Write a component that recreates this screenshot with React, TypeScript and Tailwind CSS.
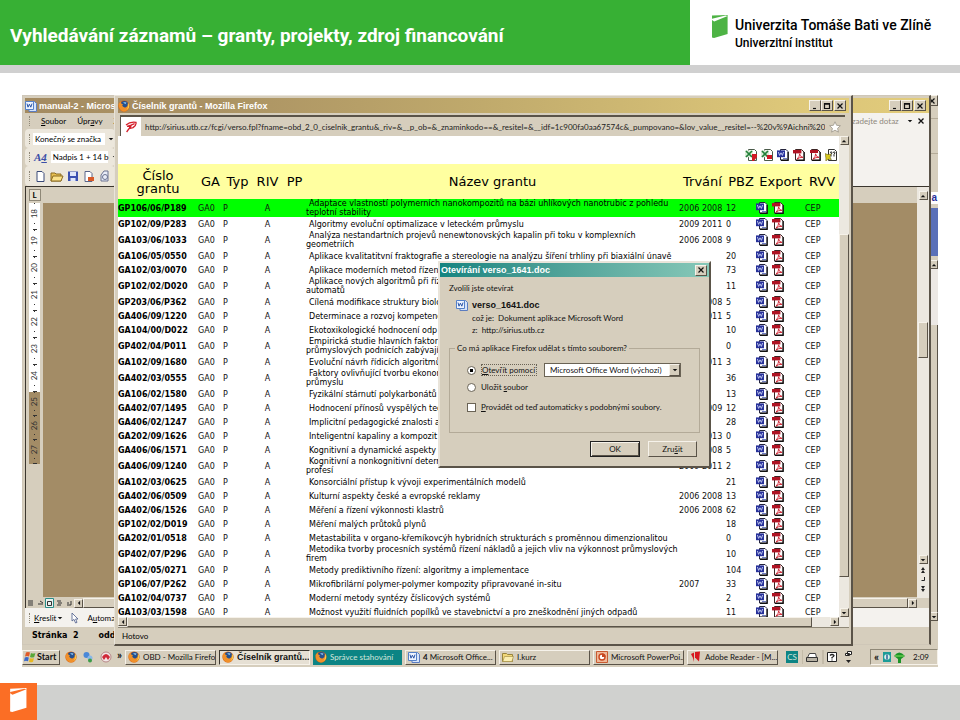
import React from 'react';
import clsx from 'clsx';

const ui = "font-['Lato','Liberation_Sans',Arial,sans-serif] text-[8px] leading-[10px]";
const caption = "font-['Liberation_Sans',Arial,sans-serif] text-[9px] font-bold whitespace-nowrap";
const bevel =
  'border border-t-[#f6f2ea] border-l-[#f6f2ea] border-r-[#5a5348] border-b-[#5a5348] bg-[#d6cebd]';

type Grant = {
  id: string;
  name: string;
  years?: string;
  pbz: string;
};

const grants: Grant[] = [
  { id: 'GP106/06/P189', name: 'Adaptace vlastností polymerních nanokompozitů na bázi uhlíkových nanotrubic z pohledu\nteplotní stability', years: '2006 2008', pbz: '12' },
  { id: 'GP102/09/P283', name: 'Algoritmy evoluční optimalizace v leteckém průmyslu', years: '2009 2011', pbz: '0' },
  { id: 'GA103/06/1033', name: 'Analýza nestandartních projevů nenewtonovských kapalin při toku v komplexních\ngeometriích', years: '2006 2008', pbz: '9' },
  { id: 'GA106/05/0550', name: 'Aplikace kvalitatitvní fraktografie a stereologie na analýzu šíření trhliny při biaxiální únavě', pbz: '20' },
  { id: 'GA102/03/0070', name: 'Aplikace moderních metod řízení', pbz: '73' },
  { id: 'GP102/02/D020', name: 'Aplikace nových algoritmů při říz\nautomatů', pbz: '11' },
  { id: 'GP203/06/P362', name: 'Cílená modifikace struktury biolo', years: '2006 2008', pbz: '5' },
  { id: 'GA406/09/1220', name: 'Determinace a rozvoj kompetenc', years: '2009 2011', pbz: '5' },
  { id: 'GA104/00/D022', name: 'Ekotoxikologické hodnocení odp', pbz: '10' },
  { id: 'GP402/04/P011', name: 'Empirická studie hlavních faktorů\nprůmyslových podnicích zabývajíc', pbz: '0' },
  { id: 'GA102/09/1680', name: 'Evoluční návrh řídicích algoritmů', years: '2009 2011', pbz: '3' },
  { id: 'GA402/03/0555', name: 'Faktory ovlivňující tvorbu ekonom\nprůmyslu', pbz: '36' },
  { id: 'GA106/02/1580', name: 'Fyzikální stárnutí polykarbonátů', pbz: '13' },
  { id: 'GA402/07/1495', name: 'Hodnocení přínosů vyspělých tec', years: '2007 2009', pbz: '12' },
  { id: 'GA406/02/1247', name: 'Implicitní pedagogické znalosti a', pbz: '28' },
  { id: 'GA202/09/1626', name: 'Inteligentní kapaliny a kompozit', years: '2009 2013', pbz: '0' },
  { id: 'GA406/06/1571', name: 'Kognitivní a dynamické aspekty', years: '2006 2008', pbz: '5' },
  { id: 'GA406/09/1240', name: 'Kognitivní a nonkognitivní determ\nprofesí', years: '2009 2011', pbz: '2' },
  { id: 'GA102/03/0625', name: 'Konsorciální přístup k vývoji experimentálních modelů', pbz: '21' },
  { id: 'GA402/06/0509', name: 'Kulturní aspekty české a evropské reklamy', years: '2006 2008', pbz: '13' },
  { id: 'GA402/06/1526', name: 'Měření a řízení výkonnosti klastrů', years: '2006 2008', pbz: '62' },
  { id: 'GP102/02/D019', name: 'Měření malých průtoků plynů', pbz: '18' },
  { id: 'GA202/01/0518', name: 'Metastabilita v organo-křemíkovcýh hybridních strukturách s proměnnou dimenzionalitou', pbz: '0' },
  { id: 'GP402/07/P296', name: 'Metodika tvorby procesních systémů řízení nákladů a jejich vliv na výkonnost průmyslových\nfirem', pbz: '10' },
  { id: 'GA102/05/0271', name: 'Metody prediktivního řízení: algoritmy a implementace', pbz: '104' },
  { id: 'GP106/07/P262', name: 'Mikrofibrilární polymer-polymer kompozity připravované in-situ', years: '2007', pbz: '33' },
  { id: 'GA102/04/0737', name: 'Moderní metody syntézy číslicových systémů', pbz: '2' },
  { id: 'GA103/03/1598', name: 'Možnost využití fluidních popílků ve stavebnictví a pro zneškodnění jiných odpadů', pbz: '11' },
];

/* ---------- Icons ---------- */

const BookLogo = ({ className, fill, band }: { className: string; fill: string; band: string }) => (
  <svg viewBox="0 0 16 23" className={className} aria-hidden="true">
    <path d="M0 0.6L15.6 0L15.6 19L2 23L0 22.6Z" fill={fill} />
    <path d="M0 5L0 3.8L13.5 0.6L15.6 1.1L2.2 6.4Z" fill={band} />
  </svg>
);

const FirefoxIcon = ({ className = 'size-3' }: { className?: string }) => (
  <svg viewBox="0 0 12 12" className={clsx('shrink-0', className)} aria-hidden="true">
    <circle cx="6" cy="6" r="5.6" fill="#d9600f" />
    <circle cx="6.4" cy="4.8" r="3.8" fill="#24508f" />
    <path d="M5 2.6q2-1.4 3.6 0q-1 .6-.4 1.6q-1.4 0-3.2-1.6z" fill="#7db3e0" />
    <path d="M.6 4L2.6 1.2L3 3.2L5 4.4L4.2 5.6Q5 8 8 7.2Q10 6.4 9.8 3.4Q11.6 5.6 10.8 8Q9 11.8 5.4 11.4Q.6 10.4.6 4z" fill="#f0902a" />
    <path d="M9.8 2.2Q11.8 4.6 11 7.6Q10 9.6 8.4 10Q10.8 7 9.8 2.2z" fill="#f8cc4a" />
  </svg>
);

const WordIcon = ({ className = 'size-3' }: { className?: string }) => (
  <svg viewBox="0 0 12 12" className={clsx('shrink-0', className)} aria-hidden="true">
    <path d="M3.5.5h5.500l2 2v8.500h-7.500z" fill="#fff" stroke="#24243c" />
    <path d="M11.2 3v8.4H4" fill="none" stroke="#111" strokeWidth="1.2" />
    <path d="M6 9.5h4" stroke="#6e7cc0" />
    <path d="M0 1.4h8v6.8H0z" fill="#27319a" />
    <path d="M1.4 3l1.2 3.4L4 3.8L5.400 6.400L6.600 3" fill="none" stroke="#c8d0f4" strokeWidth=".9" />
  </svg>
);

const DocIcon = ({ className = 'size-3' }: { className?: string }) => (
  <svg viewBox="0 0 12 12" className={clsx('shrink-0', className)} aria-hidden="true">
    <path d="M4 1.5h5.5l2 2v8H4z" fill="#d6e4fa" stroke="#5b7cc0" />
    <path d="M.5 1.5h8v8h-8z" fill="#eef4ff" stroke="#5480c8" />
    <path d="M2 3.6l1 3.6l1.4-3l1.4 3l1.2-3.6" fill="none" stroke="#2a55a8" />
  </svg>
);

const PdfIcon = ({ className = 'size-3', plain = false }: { className?: string; plain?: boolean }) => (
  <svg viewBox="0 0 12 12" className={clsx('shrink-0', className)} aria-hidden="true">
    <path d="M2.5.5h6l2.500 2.6v8h-8.500z" fill="#fff" stroke="#3c2424" />
    <path d="M11.2 3v8.4H3" fill="none" stroke="#111" strokeWidth="1.2" />
    <path d={plain ? 'M1 1h8v3H1z' : 'M0 1h8.4v3.4H0z'} fill="#b01424" />
    <path d="M4 10.2Q7 7 6.6 4.8Q7 8 10 8.4Q6.6 8 4 10.2z" fill="none" stroke="#d02030" strokeWidth=".9" />
  </svg>
);

const ExcelIcon = ({ mark }: { mark: string }) => (
  <svg viewBox="0 0 12 12" className="size-3" aria-hidden="true">
    <path d="M3.5.5h6l2 2v9h-8z" fill="#fff" stroke="#4a5a4a" />
    <path d="M0 1.4h8v6.8H0z" fill="#dcecd8" />
    <path d="M1 2l6 6M7 2L1 8" stroke="#23813a" strokeWidth="1.7" />
    <path d={mark} fill="#d01824" />
  </svg>
);

const FindIcon = () => (
  <svg viewBox="0 0 12 12" className="size-3" aria-hidden="true">
    <path d="M3.5.5h6l2 2v9h-8z" fill="#fff" stroke="#333" />
    <path d="M5 3.5q2-1.6 2 .4L6 5.5v2M8 3.5q2-1.6 2 .4L9 5.5v2" fill="none" stroke="#222" />
    <path d="M0 4.6l3 1 3-.6-1 3 1.4 2.6-3.4-.4L.8 12 .9 9z" fill="#d8c920" stroke="#5a5416" strokeWidth=".5" />
  </svg>
);

const Arrow = ({ dir }: { dir: 'up' | 'down' | 'left' | 'right' }) => {
  const d = {
    up: 'M1 5.5h6L4 2.5z',
    down: 'M1 2.5h6L4 5.5z',
    left: 'M5.5 1v6L2.5 4z',
    right: 'M2.5 1v6L5.5 4z',
  }[dir];
  return (
    <svg viewBox="0 0 8 8" className="size-[6px] shrink-0" aria-hidden="true">
      <path d={d} fill="#111" />
    </svg>
  );
};

const FolderIcon = () => (
  <svg viewBox="0 0 12 12" className="size-3 shrink-0" aria-hidden="true">
    <path d="M.5 2.5h4l1 1h5v7H.5z" fill="#f2d878" stroke="#98843c" />
    <path d="M2.5 5.5h9l-1.6 5H.8z" fill="#fbeeb0" stroke="#a8924a" strokeWidth=".7" />
  </svg>
);

/* ---------- Shared controls ---------- */

const ScrollButton = ({ dir, label }: { dir: 'up' | 'down' | 'left' | 'right'; label: string }) => (
  <button aria-label={label} className={clsx('flex size-[9px] shrink-0 items-center justify-center', bevel)}>
    <Arrow dir={dir} />
  </button>
);

const captionShapes = {
  Minimalizovat: 'M2 6.5h3',
  Maximalizovat: 'M1.5 1.5h5v5h-5zM1.5 2.2h5',
  Zavřít: 'M1.5 1.5l5 5M6.5 1.5l-5 5',
};

const CaptionButton = ({ kind }: { kind: keyof typeof captionShapes }) => (
  <button aria-label={kind} className={clsx('flex h-[11px] w-3 items-center justify-center', bevel)}>
    <svg viewBox="0 0 8 8" className="size-2" aria-hidden="true">
      <path d={captionShapes[kind]} fill="none" stroke="#111" strokeWidth="1.2" />
    </svg>
  </button>
);

const CaptionButtons = () => (
  <div className="ml-auto flex pr-[3px]">
    <CaptionButton kind="Minimalizovat" />
    <CaptionButton kind="Maximalizovat" />
    <span className="w-px" />
    <CaptionButton kind="Zavřít" />
  </div>
);

/* ---------- Word window ---------- */

const Grip = () => <span className="h-[10px] w-px shrink-0 border-l border-dotted border-[#8f8877]" />;

const Ruler = () => (
  <div className="w-[11px] shrink-0 bg-white">
    {[18, 19, 20, 21, 22, 23, 24, 25, 26, 27].map((n, i) => (
      <div
        key={n}
        className={clsx(
          'flex flex-col items-center justify-between text-[8px] leading-[9px] text-[#333]',
          i < 7 ? 'h-[27px]' : 'h-[24px] bg-[#a38c66]',
        )}
      >
        <span className="size-px bg-[#333]" />
        <span className="rotate-180 [writing-mode:vertical-rl]">{n}</span>
        <span className="size-px bg-[#333]" />
        <span className="h-px w-1 bg-[#333]" />
      </div>
    ))}
  </div>
);

const WordWindow = () => (
  <section className={clsx('absolute inset-y-0 left-0 right-[7px] mb-[22px] flex flex-col overflow-hidden border border-[#cfc7b8] border-r-2 border-r-[#5a5348] bg-[#d6cebd] pl-0.5', ui)}>
    <div className="mt-0.5 flex h-[15px] shrink-0 items-center gap-[2px] bg-linear-to-r from-[#a38a60] to-[#e3cd7c]">
      <DocIcon />
      <h2 className={clsx('w-[75px] overflow-hidden text-white', caption)}>manual-2 - Microsoft</h2>
      <CaptionButtons />
    </div>

    <div className="flex h-[73px] shrink-0 bg-[#f4f2ee]">
      <div className="flex w-[90px] shrink-0 flex-col overflow-hidden bg-[#d6cebd] whitespace-nowrap">
        <div className="flex h-4 items-center gap-[11px] pl-1">
          <Grip />
          <span><u>S</u>oubor</span>
          <span>Úpr<u>a</u>vy</span>
          <span>Zobrazit</span>
        </div>
        <div className="flex h-[19px] items-center gap-[3px] rounded bg-[#ece7dc] pl-1">
          <Grip />
          <span className="flex h-3 w-[72px] items-center bg-white pl-0.5">Konečný se značka</span>
          <Arrow dir="down" />
        </div>
        <div className="flex h-[18px] items-center gap-1 rounded bg-[#ece7dc] pl-1">
          <Grip />
          <i className="font-['Liberation_Serif',serif] text-[11px] font-bold text-[#3b4fa8]">A<u>4</u></i>
          <span className="flex h-3 w-[57px] items-center bg-white pl-0.5">Nadpis 1 + 14 b</span>
          <Arrow dir="down" />
        </div>
        <div className="flex h-5 items-center gap-1 rounded bg-[#ece7dc] pl-1">
          <Grip />
          <svg viewBox="0 0 76 12" className="h-3 w-[76px]" aria-hidden="true">
            <path d="M3 1.5h5l2 2v8H3z" fill="#fff" stroke="#3a4a78" />
            <path d="M17 3h4l1 1h5v7H17z" fill="#e8c050" stroke="#8a6a20" />
            <path d="M19 6h10l-2 5H17z" fill="#fbe28a" stroke="#8a6a20" />
            <path d="M34 1.500h10v9.500h-10z" fill="#3b50b0" />
            <path d="M36 2h6v4h-6zM36.500 8h5v3h-5z" fill="#dfe6fa" />
            <path d="M51 1.5h5l2 2v8h-7z" fill="#fff" stroke="#5a6488" />
            <path d="M54 7h6v4h-6z" fill="#d85a28" />
            <path d="M67 5l3-4h4v10h-7V5z" fill="#e8ecf8" stroke="#6a7290" />
            <circle cx="71" cy="7" r="2.5" fill="none" stroke="#6a7290" />
          </svg>
        </div>
      </div>
      <div className="mt-[2px] ml-auto flex h-3 items-center gap-1 pr-1">
        <label htmlFor="ask" className="sr-only">Dotaz</label>
        <input id="ask" defaultValue="zadejte dotaz" className="w-[51px] bg-transparent text-[#8f897c]" />
        <Arrow dir="down" />
        <svg viewBox="0 0 8 8" className="size-2 shrink-0" aria-hidden="true">
          <path d="M1.5 1.5l5 5M6.5 1.5l-5 5" stroke="#111" strokeWidth="1.3" />
        </svg>
      </div>
    </div>

    <div className="flex min-h-0 flex-1 border-t border-l border-[#3b362e]">
      <div className="flex w-[17px] shrink-0 flex-col items-center">
        <div className="mt-0.5 mb-0.5 flex size-3 shrink-0 items-center justify-center border border-[#8f8877] bg-[#e6dfd0] text-[8px] font-bold">
          L
        </div>
        <Ruler />
      </div>
      <div className="mt-4 mb-px flex-1 bg-[#a38c66]" />
      <div className="flex w-[12px] shrink-0 flex-col items-center bg-[#ece8e0] pt-1">
        <ScrollButton dir="up" label="Nahoru" />
        <div className="h-[122px]" />
        <div className={clsx('h-9 w-[10px]', bevel)} />
        <div className="mt-auto" />
        <ScrollButton dir="down" label="Dolů" />
        <svg viewBox="0 0 8 30" className="mb-1 h-[30px] w-2" aria-hidden="true">
          <path d="M2 6h4L4 3zM2 9h4L4 6zM2 22h4l-2 3zM2 25h4l-2 3z" fill="#222" />
          <path d="M5.5 13v3.5h-3" fill="none" stroke="#222" />
        </svg>
      </div>
    </div>
    <div className="flex h-[10px] shrink-0 items-center border-l border-[#3b362e] bg-[#d6cebd] pr-3">
      <svg viewBox="0 0 48 10" className="h-[10px] w-12 shrink-0" aria-hidden="true">
        <path d="M2 3h5M2 5h5M2 7h5M12 6h5M14 3l3 2M31 3h4M32 5h4M31 7h4M41 7h4V3M41 5h2" stroke="#333" fill="none" />
        <path d="M19.5.5h8v9h-8z" fill="#e8f2f0" stroke="#288c88" />
        <path d="M21.5 3.5h4v4h-4z" fill="none" stroke="#333" />
      </svg>
      <ScrollButton dir="left" label="Vlevo" />
      <div className={clsx('h-full flex-1', bevel)} />
      <ScrollButton dir="right" label="Vpravo" />
    </div>
    <div className="flex h-[19px] shrink-0 items-center gap-2 bg-[#f4f2ee] pl-1 whitespace-nowrap">
      <Grip />
      <span className="-ml-1 flex items-center gap-px"><span><u>K</u>reslit</span> <Arrow dir="down" /></span>
      <svg viewBox="0 0 8 12" className="h-3 w-2" aria-hidden="true">
        <path d="M1 1v8l2-1.6L4.6 11 6 10.4 4.6 7H7z" fill="#fff" stroke="#4a5a88" strokeWidth=".8" />
      </svg>
      <span>A<u>u</u>tomat</span>
    </div>
    <div className="flex h-[17px] shrink-0 items-center gap-5 pl-[7px] font-['DejaVu_Sans',Verdana,sans-serif] font-bold">
      <span>Stránka&nbsp; 2</span>
      <span>odd</span>
    </div>
  </section>
);

/* Edge of the window furthest back on the desktop */
const BackWindow = () => (
  <section className="absolute inset-y-0 right-0 mb-[22px] flex w-[30px] flex-col items-end bg-[#d6cebd]">
    <div className="flex h-[11px] w-full justify-end bg-[#e3cd7c]"><CaptionButton kind="Zavřít" /></div>
    <div className="mt-3 w-full border-t border-[#b4ab98]" />
    <div className="mt-[34px] w-full border-t border-[#b4ab98]" />
    <div className="mt-[38px] flex h-3 w-full justify-end bg-white pr-px text-[10px] leading-3 font-bold text-[#27319a]">a</div>
    <div className="mt-1 h-12 w-full bg-[#5a70b8]" />
    <div className="mt-1"><ScrollButton dir="up" label="Nahoru" /></div>
    <div className="h-14 w-full bg-[#ece8e4]" />
    <div className="w-full flex-1 border-r border-[#5a5348]" />
    <ScrollButton dir="down" label="Dolů" />
    <div className="h-[24px]" />
  </section>
);

/* ---------- Firefox window ---------- */

const GrantTable = () => (
  <table className="w-full table-fixed border-collapse font-['DejaVu_Sans',Verdana,sans-serif] text-[8px] leading-[9px] text-[#111]">
    <colgroup>
      <col className="w-[80px]" />
      <col className="w-[25px]" />
      <col className="w-[29px]" />
      <col className="w-[31px]" />
      <col className="w-[23px]" />
      <col />
      <col className="w-[47px]" />
      <col className="w-[30px]" />
      <col className="w-[49px]" />
      <col className="w-[34px]" />
    </colgroup>
    <thead>
      <tr className="h-[35px] bg-[#ffffa0] text-[13px] leading-[13px] text-black *:p-0 *:font-normal">
        <th>Číslo<br />grantu</th>
        <th>GA</th>
        <th>Typ</th>
        <th>RIV</th>
        <th>PP</th>
        <th>Název grantu</th>
        <th>Trvání</th>
        <th>PBZ</th>
        <th>Export</th>
        <th>RVV</th>
      </tr>
    </thead>
    <tbody>
      {grants.map((g, i) => (
        <tr
          key={g.id}
          className={clsx('*:p-0', i === 0 && 'bg-[#00ff00]', g.name.includes('\n') ? 'h-[18px]' : 'h-[14px]')}
        >
          <td className="font-bold text-black">{g.id}</td>
          <td>GA0</td>
          <td>P</td>
          <td className="text-center">A</td>
          <td />
          <td className="indent-[3px] whitespace-pre text-black">{g.name}</td>
          <td className="whitespace-nowrap">{g.years}</td>
          <td>{g.pbz}</td>
          <td>
            <div className="flex gap-1">
              <a href="#doc" aria-label="Word"><WordIcon /></a>
              <a href="#pdf" aria-label="PDF"><PdfIcon /></a>
            </div>
          </td>
          <td>CEP</td>
        </tr>
      ))}
    </tbody>
  </table>
);

const FirefoxWindow = () => (
  <section className={clsx('absolute inset-y-0 left-[92px] right-[85px] mb-[21px] flex flex-col border border-[#e9e4da] border-r-2 border-b-2 border-r-[#5a5348] border-b-[#5a5348] bg-[#d6cebd] pt-0.5 pr-0.5 pl-[3px]', ui)}>
    <div className="flex h-[15px] shrink-0 items-center gap-[2px] bg-linear-to-r from-[#a38a60] via-[#c0aa6c] to-[#e3cd7c]">
      <FirefoxIcon />
      <h2 className={clsx('text-white', caption)}>Číselník grantů - Mozilla Firefox</h2>
      <CaptionButtons />
    </div>

    <div className="mt-0.5 mr-1 ml-0.5 flex h-[21px] shrink-0 items-center gap-1 border-t-2 border-l border-[#5a5348]">
      <span className="flex h-full w-5 shrink-0 items-center justify-center bg-white">
        <svg viewBox="0 0 14 12" className="h-3 w-[14px]" aria-hidden="true">
          <path d="M2 4Q6 .5 12 1.4Q12.6 4 9 6.6L5 7.6M3 5.4L7 4.2L10.6 2.6M7.4 4.4L2.6 11" fill="none" stroke="#d4202c" strokeWidth="1.3" />
        </svg>
      </span>
      <label htmlFor="url" className="sr-only">Adresa</label>
      <input
        id="url"
        className="min-w-0 flex-1 bg-transparent text-[#222]"
        defaultValue="http://sirius.utb.cz/fcgi/verso.fpl?fname=obd_2_0_ciselnik_grantu&_riv=&__p_ob=&_znaminkodo==&_resitel=&__idf=1c900fa0aa67574c&_pumpovano=&lov_value__resitel=--%20v%9Aichni%20-&_rokod"
      />
      <svg viewBox="0 0 12 12" className="mr-1 size-3 shrink-0" aria-hidden="true">
        <path d="M6 .8l1.6 3.5 3.8.4-2.8 2.6.8 3.8L6 9.2l-3.4 1.9.8-3.8L.6 4.7l3.8-.4z" fill="#fff" stroke="#9a9488" strokeWidth=".8" />
      </svg>
    </div>

    <div className="flex min-h-0 flex-1">
      <div className="min-w-0 flex-1 overflow-hidden bg-white">
        <div className="flex h-7 items-center justify-end gap-1 pt-[10px] pr-0.5">
          <ExcelIcon mark="M7 5h5v3L9 12H7z" />
          <ExcelIcon mark="M6 6h5v4H6z" />
          <WordIcon />
          <PdfIcon />
          <PdfIcon plain />
          <FindIcon />
        </div>
        <GrantTable />
      </div>
      <div className="flex w-[10px] shrink-0 flex-col items-center bg-[#ece8e0]">
        <ScrollButton dir="up" label="Nahoru" />
        <div className="h-[89px]" />
        <div className={clsx('h-[343px] w-full', bevel)} />
        <div className="mt-auto"><ScrollButton dir="down" label="Dolů" /></div>
      </div>
    </div>

    <div className="flex h-[10px] shrink-0 bg-[#ece8e0] pr-[10px]">
      <ScrollButton dir="left" label="Vlevo" />
      <div className={clsx('mr-[18px] flex-1', bevel)} />
      <ScrollButton dir="right" label="Vpravo" />
    </div>
    <div className="flex h-[17px] shrink-0 items-center border-t border-[#8f8877] pl-1">Hotovo</div>
  </section>
);

/* ---------- Download dialog ---------- */

const OpenDialog = () => (
  <div
    role="dialog"
    aria-label="Otevírání verso_1641.doc"
    className={clsx('absolute top-[166px] left-[416px] flex w-[273px] flex-col border-2 border-t-[#e9e4da] border-l-[#e9e4da] border-r-[#5a5348] border-b-[#5a5348] bg-[#d6cebd] text-[#111]', ui)}
  >
    <div className="flex h-[14px] items-center bg-linear-to-r from-[#128480] to-[#86c8b8] pr-0.5 pl-px">
      <h2 className={clsx('text-white', caption)}>Otevírání verso_1641.doc</h2>
      <div className="ml-auto flex"><CaptionButton kind="Zavřít" /></div>
    </div>
    <div className="px-[9px] pt-[6px] pb-[9px]">
      <p>Zvolili jste otevírat</p>
      <div className="mt-[6px] flex gap-[4px] pl-[7px]">
        <DocIcon />
        <div>
          <p className={clsx('pt-px', caption)}>verso_1641.doc</p>
          <p className="mt-[3px]">což je:&nbsp; Dokument aplikace Microsoft Word</p>
          <p className="mt-0.5">z:&nbsp; http://sirius.utb.cz</p>
        </div>
      </div>
      <fieldset className="mt-2 h-[90px] border border-[#b3aa98] px-[17px]">
        <legend className="-ml-[12px] px-[2px]">Co má aplikace Firefox udělat s tímto souborem?</legend>
        <div className="mt-[10px] flex items-center gap-[5px]">
          <input
            type="radio"
            name="action"
            id="open"
            defaultChecked
            className="size-[9px] shrink-0 appearance-none rounded-full border border-[#6a6355] bg-white bg-radial from-black from-30% to-white to-35%"
          />
          <label htmlFor="open" className="w-[56px] border border-dotted border-[#6a6355] whitespace-nowrap"><u>O</u>tevřít pomocí</label>
          <span className="relative ml-0.5 flex">
            <select
              aria-label="Aplikace"
              className="h-[14px] w-[137px] appearance-none border border-[#6a6355] bg-white pl-[5px]"
            >
              <option>Microsoft Office Word (výchozí)</option>
            </select>
            <span className={clsx('pointer-events-none absolute top-px right-px flex h-3 w-[11px] items-center justify-center', bevel)}>
              <Arrow dir="down" />
            </span>
          </span>
        </div>
        <div className="mt-[5px] flex items-center gap-[5px]">
          <input type="radio" name="action" id="save" className="size-[9px] appearance-none rounded-full border border-[#6a6355] bg-white" />
          <label htmlFor="save">Uložit <u>s</u>oubor</label>
        </div>
        <div className="mt-[10px] flex items-center gap-[5px]">
          <input type="checkbox" id="always" className="size-[9px] appearance-none border border-[#6a6355] bg-white" />
          <label htmlFor="always"><u>P</u>rovádět od teď automaticky s podobnými soubory.</label>
        </div>
      </fieldset>
      <div className="mt-2 flex justify-end gap-2 pr-[3px]">
        <button className="h-4 w-[50px] border border-[#222] bg-[#d6cebd] shadow-[inset_1px_1px_#f6f2ea,inset_-1px_-1px_#5a5348]">OK</button>
        <button className={clsx('h-4 w-[49px]', bevel)}>Zru<u>š</u>it</button>
      </div>
    </div>
  </div>
);

/* ---------- Taskbar ---------- */

const TaskButton = ({ icon, children, className = bevel }: { icon: React.ReactNode; children: React.ReactNode; className?: string }) => (
  <button className={clsx('flex h-[15px] min-w-0 flex-1 items-center gap-[3px] overflow-hidden pl-0.5 whitespace-nowrap', className)}>
    {icon}
    {children}
  </button>
);

const Taskbar = () => (
  <nav className={clsx('absolute inset-x-0 bottom-0 flex h-[20px] items-center bg-[#d6cebd] text-[#111]', ui)}>
    <button className={clsx('flex h-[15px] w-[38px] shrink-0 items-center gap-px pl-px text-[9px] font-bold', bevel)}>
      <svg viewBox="0 0 12 12" className="size-3 shrink-0" aria-hidden="true">
        <path d="M2 1.6q2-1 4 0L5 5.4q-2-1-4 0z" fill="#e05a28" />
        <path d="M7 2q2 1 4.400 0L10.200 6q-2 1-4.200 0z" fill="#58a838" />
        <path d="M.8 6.400q2-1 4 0L4 10.200q-2-1-4 0z" fill="#3868c8" />
        <path d="M5.800 7q2 1 4.200 0L9 10.800q-2 1-4 0z" fill="#e8b820" />
      </svg>
      Start
    </button>
    <div className="flex w-[65px] shrink-0 items-center justify-between pr-[3px] pl-[5px]">
      <FirefoxIcon />
      <svg viewBox="0 0 12 12" className="size-3" aria-hidden="true">
        <circle cx="4.500" cy="4" r="3" fill="#4a88d8" />
        <circle cx="8" cy="7" r="2.500" fill="#8ab8e8" />
        <circle cx="8" cy="9.500" r="2" fill="#3c9c48" />
      </svg>
      <svg viewBox="0 0 12 12" className="size-3" aria-hidden="true">
        <circle cx="6" cy="6" r="5" fill="#f3e6e6" stroke="#b88888" />
        <path d="M2 6q4-6 8 0L8 9 6 6 4 9z" fill="#d02838" />
      </svg>
      <span className="pb-1 text-[11px] font-bold">»</span>
    </div>
    <div className="flex min-w-0 flex-1 gap-[3px]">
      <TaskButton icon={<FirefoxIcon />}>OBD - Mozilla Firefox</TaskButton>
      <TaskButton
        icon={<FirefoxIcon />}
        className="border border-t-[#3b362e] border-l-[#3b362e] border-r-[#f6f2ea] border-b-[#f6f2ea] bg-[#e6e0d4]"
      >
        <span className={caption}>Číselník grantů...</span>
      </TaskButton>
      <TaskButton icon={<FirefoxIcon />} className="bg-[#0c8484] text-[#d6e6dc]">Správce stahování</TaskButton>
      <TaskButton icon={<DocIcon />}>
        <span><b>4</b> Microsoft Office...</span> <Arrow dir="down" />
      </TaskButton>
      <TaskButton icon={<FolderIcon />}>I.kurz</TaskButton>
      <TaskButton
        icon={
          <svg viewBox="0 0 12 12" className="size-3 shrink-0" aria-hidden="true">
            <path d="M.5.500h11v11H.500z" fill="#f0b898" stroke="#c85a30" />
            <circle cx="6" cy="6" r="3" fill="#fff" stroke="#c84820" strokeWidth="1.400" />
            <path d="M6 6V2.500a3.500 3.500 0 0 1 3.500 3.500z" fill="#c84820" />
          </svg>
        }
      >
        Microsoft PowerPoi...
      </TaskButton>
      <TaskButton
        icon={
          <svg viewBox="0 0 12 12" className="size-3 shrink-0" aria-hidden="true">
            <path d="M1 3l3-1.500V11L3 7z" fill="#d81820" />
            <path d="M5 1l5-.500-1 10-4-4z" fill="#d81820" />
          </svg>
        }
      >
        Adobe Reader - [M...
      </TaskButton>
    </div>
    <div className="ml-2 flex w-[84px] shrink-0 items-center">
      <span className="flex size-3 items-center justify-center bg-[#0c8484] text-[#d6e6dc]">CS</span>
      <svg viewBox="0 0 66 14" className="ml-1 h-[14px] w-[66px]" aria-hidden="true">
        <path d="M0 0v14M21 0v14" stroke="#b0a794" />
        <path d="M5.500 7.500l2-4h6l1 4z" fill="#fff" stroke="#444" />
        <path d="M4.500 7.500h11v4h-11z" fill="#b8b2a4" stroke="#333" />
        <path d="M25.500 2.500h9v9h-9z" fill="#fff" stroke="#222" />
        <path d="M28 5.500q2-2 4 0q0 1-2 2v1M30 9.500v1" fill="none" stroke="#222" strokeWidth="1.300" />
        <path d="M45.500 1.500h4v3h-4zM43.500 3.500h4v2h-4z" fill="#fff" stroke="#222" />
        <path d="M44 10h5l-2.500 3z" fill="#222" />
      </svg>
    </div>
    <div className="flex h-4 w-[68px] shrink-0 items-center gap-[3px] border border-t-[#8f8877] border-l-[#8f8877] border-r-[#f6f2ea] border-b-[#f6f2ea] pl-[3px]">
      <span className="text-[11px] font-bold">«</span>
      <svg viewBox="0 0 24 12" className="h-3 w-6" aria-hidden="true">
        <path d="M1 1h8v10H1z" fill="#1c9c98" />
        <circle cx="5" cy="6" r="2.800" fill="#d8f0ec" />
        <path d="M5 3.500v5" stroke="#124c8c" strokeWidth="1.300" />
        <path d="M12 5q5-7 11 0l-4 3v4h-3V8z" fill="#1c9428" />
        <path d="M13 5h9" stroke="#8ce060" />
      </svg>
      <time className="ml-1">2:09</time>
    </div>
  </nav>
);

const App = () => (
  <div className="flex min-h-screen flex-col overflow-hidden bg-white font-['Liberation_Sans',Arial,sans-serif]">
    <header className="flex h-[73px] shrink-0 border-b-8 border-[#d0d0d0]">
      <div className="flex flex-1 items-center bg-[#37b034] pt-2 pl-[10px]">
        <h1 className="font-['Roboto','Arial_Narrow',sans-serif] text-[19px] font-bold whitespace-nowrap text-white">
          Vyhledávání záznamů – granty, projekty, zdroj financování
        </h1>
      </div>
      <div className="flex w-[270px] shrink-0 gap-[7px] pt-[15px] pl-[22px] font-['Roboto','Noto_Sans',sans-serif] text-black">
        <BookLogo className="h-[23px] w-4" fill="#4db344" band="#fff" />
        <div className="font-medium whitespace-nowrap">
          <p className="text-sm leading-[20px]">Univerzita Tomáše Bati ve Zlíně</p>
          <p className="text-xs leading-4">Univerzitní institut</p>
        </div>
      </div>
    </header>

    <main className="relative mx-[22px] mt-[22px] h-[572px] shrink-0 bg-[#d6cebd]">
      <BackWindow />
      <WordWindow />
      <FirefoxWindow />
      <OpenDialog />
      <Taskbar />
    </main>

    <footer className="mt-auto flex h-[37px] items-end bg-white">
      <div className="flex size-[37px] items-center justify-center bg-[#fb6e25] pb-1">
        <BookLogo className="h-6 w-[17px]" fill="#fff" band="#fb6e25" />
      </div>
      <div className="h-[35px] flex-1 bg-[#d0d1cf]" />
    </footer>
  </div>
);

export default App;
